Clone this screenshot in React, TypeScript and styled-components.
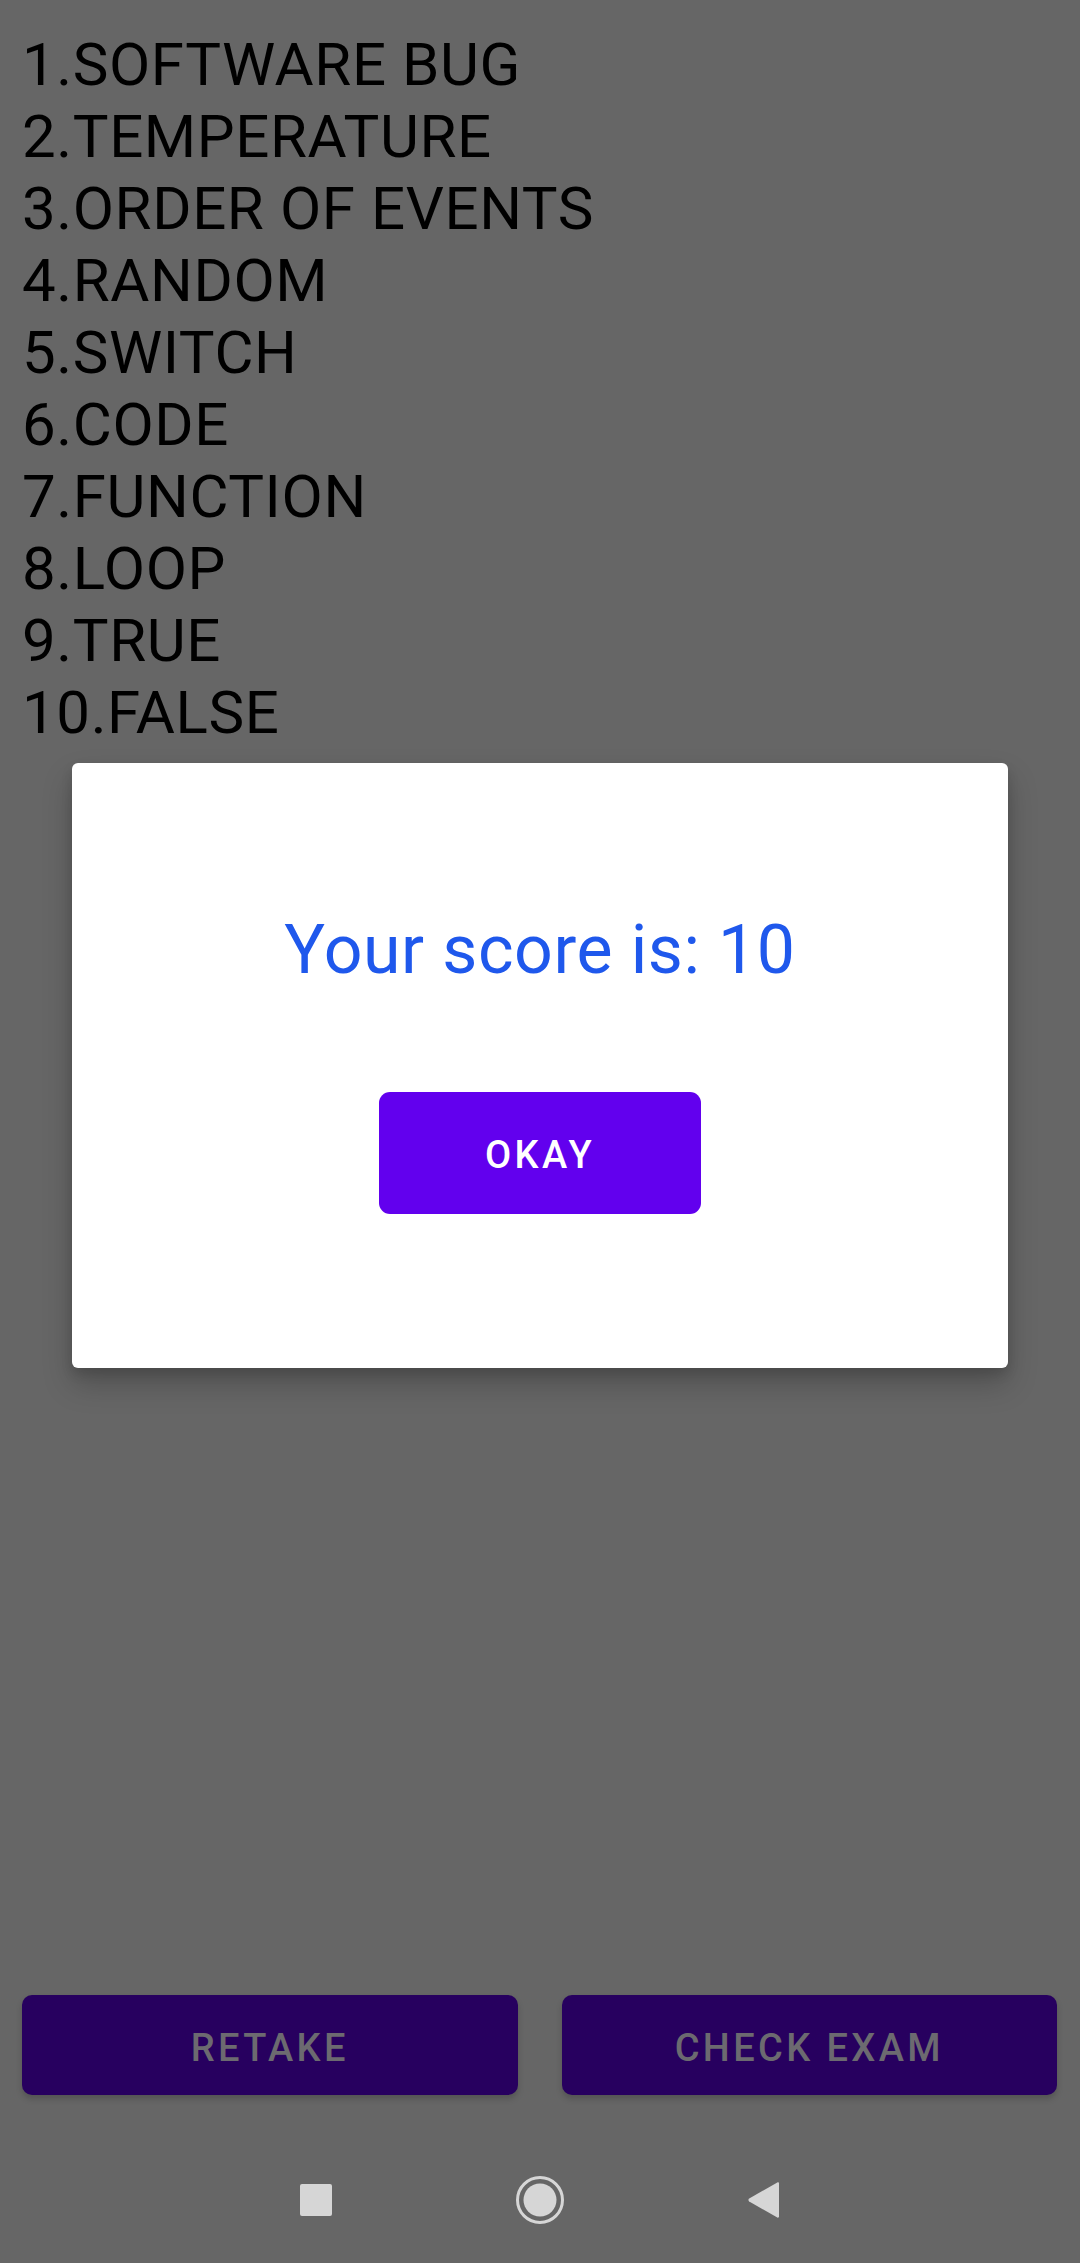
import React from "react";
import styled, { createGlobalStyle } from "styled-components";

const GlobalStyle = createGlobalStyle`
  html, body { margin: 0; padding: 0; background: #666666; }
  body { font-family: Roboto, "Noto Sans", "Liberation Sans", sans-serif; }
  * { box-sizing: border-box; }
`;

const Page = styled.div`
  position: relative;
  width: 1080px;
  height: 2263px;
  background: #666666;
  display: flex;
  flex-direction: column;
  overflow: hidden;
`;

const AnswerList = styled.div`
  display: flex;
  flex-direction: column;
  padding: 29px 0 0 22px;
`;

const Answer = styled.div`
  font-family: Roboto, sans-serif;
  font-size: 60px;
  line-height: 72px;
  letter-spacing: 0.6px;
  color: #000000;
  white-space: nowrap;
`;

const Spacer = styled.div`
  flex: 1;
`;

const ButtonRow = styled.div`
  display: grid;
  grid-template-columns: 1fr 1fr;
  gap: 44px;
  padding: 0 23px 0 22px;
  margin-bottom: 42px;
`;

const ActionButton = styled.button`
  height: 100px;
  border: none;
  border-radius: 10px;
  background: #27005f;
  color: #6c6a70;
  font-family: Roboto, sans-serif;
  font-weight: 500;
  font-size: 38px;
  letter-spacing: 0.089em;
  text-transform: uppercase;
  box-shadow: 0 4px 6px rgba(0, 0, 0, 0.18);
  padding: 5px 0 0 0;
`;

const NavBar = styled.div`
  height: 126px;
  display: flex;
  justify-content: center;
  align-items: center;
`;

const NavSlot = styled.div`
  width: 224px;
  display: flex;
  justify-content: center;
  align-items: center;
`;

const Overlay = styled.div`
  position: absolute;
  inset: 0;
  display: flex;
  justify-content: center;
  align-items: flex-start;
  padding-top: 763px;
`;

const Dialog = styled.div`
  width: 936px;
  height: 605px;
  background: #ffffff;
  border-radius: 6px;
  box-shadow: 0 16px 30px rgba(0, 0, 0, 0.22), 0 6px 12px rgba(0, 0, 0, 0.12);
  display: flex;
  flex-direction: column;
  align-items: center;
  padding-top: 147px;
`;

const Score = styled.div`
  font-family: Roboto, sans-serif;
  font-size: 68px;
  line-height: 80px;
  letter-spacing: 0.6px;
  color: #1f58ec;
  white-space: nowrap;
`;

const OkayButton = styled.button`
  margin-top: 102px;
  width: 322px;
  height: 122px;
  border: none;
  border-radius: 11px;
  background: #6200ee;
  color: #ffffff;
  font-family: Roboto, sans-serif;
  font-weight: 500;
  font-size: 38px;
  letter-spacing: 0.089em;
  padding: 4px 0 0 0;
`;

const answers = [
  "1.SOFTWARE BUG",
  "2.TEMPERATURE",
  "3.ORDER OF EVENTS",
  "4.RANDOM",
  "5.SWITCH",
  "6.CODE",
  "7.FUNCTION",
  "8.LOOP",
  "9.TRUE",
  "10.FALSE",
];

const RecentsIcon = () => (
  <svg width="32" height="32" viewBox="0 0 32 32">
    <rect x="0" y="0" width="32" height="32" rx="2" fill="#d6d6d6" />
  </svg>
);

const HomeIcon = () => (
  <svg width="50" height="50" viewBox="0 0 50 50">
    <circle cx="25" cy="25" r="22.5" fill="none" stroke="#d6d6d6" strokeWidth="3" />
    <circle cx="25" cy="25" r="16.5" fill="#d6d6d6" />
  </svg>
);

const BackIcon = () => (
  <svg width="32" height="36" viewBox="0 0 32 36">
    <path d="M31 1.5 C31 0.5 30.2 0 29.3 0.5 L1.2 16.6 C0.2 17.2 0.2 18.8 1.2 19.4 L29.3 35.5 C30.2 36 31 35.5 31 34.5 Z" fill="#d6d6d6" />
  </svg>
);

export default function App() {
  return (
    <>
      <GlobalStyle />
      <Page>
        <AnswerList>
          {answers.map((a) => (
            <Answer key={a}>{a}</Answer>
          ))}
        </AnswerList>
        <Spacer />
        <ButtonRow>
          <ActionButton>Retake</ActionButton>
          <ActionButton>Check Exam</ActionButton>
        </ButtonRow>
        <NavBar>
          <NavSlot>
            <RecentsIcon />
          </NavSlot>
          <NavSlot>
            <HomeIcon />
          </NavSlot>
          <NavSlot>
            <BackIcon />
          </NavSlot>
        </NavBar>
        <Overlay>
          <Dialog>
            <Score>Your score is: 10</Score>
            <OkayButton>OKAY</OkayButton>
          </Dialog>
        </Overlay>
      </Page>
    </>
  );
}
